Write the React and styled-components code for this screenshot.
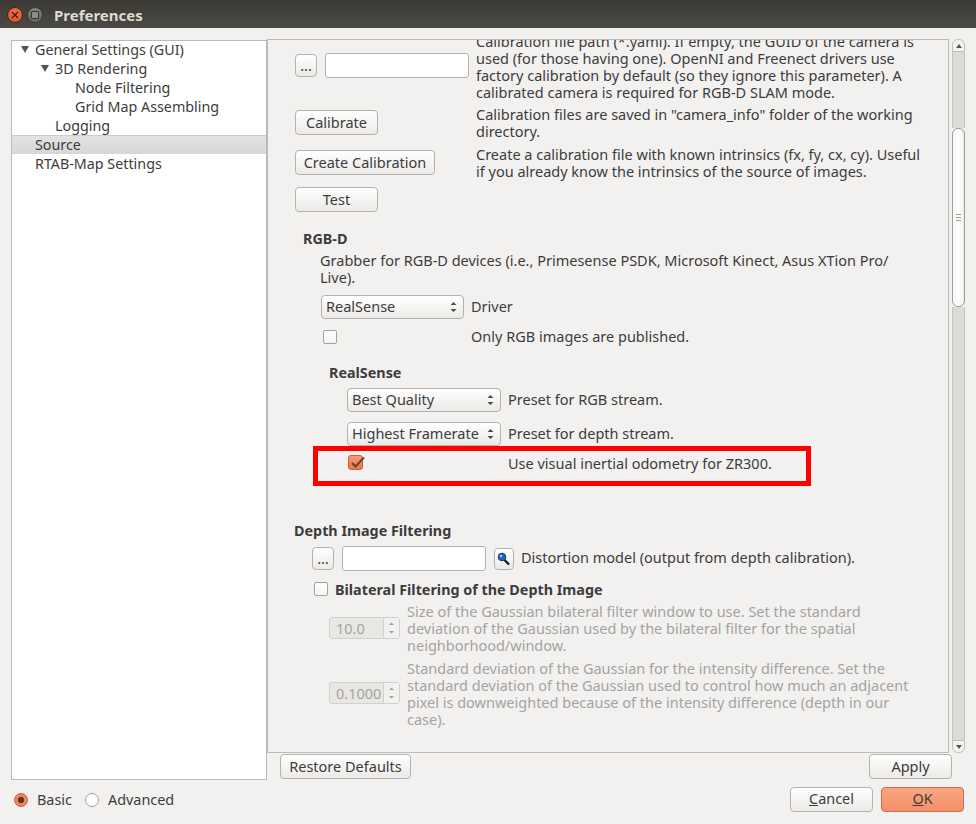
import styled, { createGlobalStyle } from "styled-components";

const App = () => {
  return (
    <>
      <Global />
      <Window>
        <TitleBar>
          <CloseDot>
            <svg width="8" height="8" viewBox="0 0 8 8">
              <path d="M1 1 L7 7 M7 1 L1 7" stroke="#4a1a08" strokeWidth="1.4" />
            </svg>
          </CloseDot>
          <MaxDot>
            <MaxSquare />
          </MaxDot>
          <Title>Preferences</Title>
        </TitleBar>

        <Body>
          <Tree>
            {treeItems.map((item) => (
              <TreeItem key={item.label} $level={item.level} $selected={item.selected}>
                {item.open && <TreeArrow $level={item.level} />}
                {item.label}
              </TreeItem>
            ))}
          </Tree>

          <RightColumn>
            <ScrollArea>
              <Viewport>
                <Content>
                  <Row $left={27}>
                    <Controls $w={181} $lift={5}>
                      <DotsButton>...</DotsButton>
                      <FileInput />
                    </Controls>
                    <Text>
                      Calibration file path (*.yaml). If empty, the GUID of the camera is<br />
                      used (for those having one). OpenNI and Freenect drivers use<br />
                      factory calibration by default (so they ignore this parameter). A<br />
                      calibrated camera is required for RGB-D SLAM mode.
                    </Text>
                  </Row>
                  <Row $top={5} $left={27}>
                    <Controls $w={181} $lift={3}>
                      <Button $w={83}>Calibrate</Button>
                    </Controls>
                    <Text>
                      Calibration files are saved in "camera_info" folder of the working<br />
                      directory.
                    </Text>
                  </Row>
                  <Row $top={6} $left={27}>
                    <Controls $w={181} $lift={3}>
                      <Button $w={140}>Create Calibration</Button>
                    </Controls>
                    <Text>
                      Create a calibration file with known intrinsics (fx, fy, cx, cy). Useful<br />
                      if you already know the intrinsics of the source of images.
                    </Text>
                  </Row>
                  <Row $top={6} $left={27}>
                    <Button $w={83}>Test</Button>
                  </Row>

                  <Heading $top={18} $left={35}>RGB-D</Heading>
                  <Row $top={6} $left={52}>
                    <Text>
                      Grabber for RGB-D devices (i.e., Primesense PSDK, Microsoft Kinect, Asus XTion Pro/<br />
                      Live).
                    </Text>
                  </Row>
                  <Row $top={8} $left={53}>
                    <Controls $w={150}>
                      <Select $w={143}>RealSense<SelectArrows /></Select>
                    </Controls>
                    <Text>Driver</Text>
                  </Row>
                  <Row $top={10} $left={55}>
                    <Controls $w={148} $lift={2}>
                      <CheckBox />
                    </Controls>
                    <Text>Only RGB images are published.</Text>
                  </Row>

                  <Heading $top={18} $left={61}>RealSense</Heading>
                  <Row $top={7} $left={79}>
                    <Controls $w={161}>
                      <Select $w={154}>Best Quality<SelectArrows /></Select>
                    </Controls>
                    <Text>Preset for RGB stream.</Text>
                  </Row>
                  <Row $top={10} $left={79}>
                    <Controls $w={161}>
                      <Select $w={154}>Highest Framerate<SelectArrows /></Select>
                    </Controls>
                    <Text>Preset for depth stream.</Text>
                  </Row>
                  <HighlightedRow $top={10} $left={80}>
                    <Controls $w={160} $lift={4}>
                      <CheckedBox>
                        <svg width="18" height="16" viewBox="0 0 18 16">
                          <path d="M3 7 L6.5 10.5 L15 1.5" fill="none" stroke="#6b4030" strokeWidth="2" />
                        </svg>
                      </CheckedBox>
                    </Controls>
                    <Text>Use visual inertial odometry for ZR300.</Text>
                    <RedBox />
                  </HighlightedRow>

                  <Heading $top={49} $left={26}>Depth Image Filtering</Heading>
                  <Row $top={7} $left={44}>
                    <Controls $w={209}>
                      <DotsButton>...</DotsButton>
                      <FileInput />
                      <IconButton>
                        <svg width="16" height="16" viewBox="0 0 16 16">
                          <path d="M8.5 9 L13 13.5" stroke="#1b1b1b" strokeWidth="2.4" />
                          <circle cx="6" cy="6" r="3.8" fill="#1f66b8" stroke="#123a66" strokeWidth="1" />
                          <circle cx="5" cy="5" r="1.2" fill="#a9d0f2" />
                        </svg>
                      </IconButton>
                    </Controls>
                    <Text>Distortion model (output from depth calibration).</Text>
                  </Row>
                  <Row $top={10} $left={46}>
                    <Controls $w={21} $lift={2}>
                      <CheckBox />
                    </Controls>
                    <Heading>Bilateral Filtering of the Depth Image</Heading>
                  </Row>
                  <Row $top={6} $left={61}>
                    <Controls $w={78} $lift={3}>
                      <Spin>10.0<SpinArrows /></Spin>
                    </Controls>
                    <Text $muted>
                      Size of the Gaussian bilateral filter window to use. Set the standard<br />
                      deviation of the Gaussian used by the bilateral filter for the spatial<br />
                      neighborhood/window.
                    </Text>
                  </Row>
                  <Row $top={6} $left={61}>
                    <Controls $w={78} $lift={4}>
                      <Spin>0.1000<SpinArrows /></Spin>
                    </Controls>
                    <Text $muted>
                      Standard deviation of the Gaussian for the intensity difference. Set the<br />
                      standard deviation of the Gaussian used to control how much an adjacent<br />
                      pixel is downweighted because of the intensity difference (depth in our<br />
                      case).
                    </Text>
                  </Row>
                </Content>
              </Viewport>
              <ScrollBar>
                <Stepper $up>
                  <StepArrow $up />
                </Stepper>
                <Trough $h={76} />
                <Thumb>
                  <Grip />
                </Thumb>
                <Trough $grow />
                <Stepper>
                  <StepArrow />
                </Stepper>
              </ScrollBar>
            </ScrollArea>
            <ActionRow>
              <Button $w={131}>Restore Defaults</Button>
              <Button $w={83}>Apply</Button>
            </ActionRow>
          </RightColumn>
        </Body>

        <Footer>
          <Modes>
            <RadioOn />
            <ModeLabel>Basic</ModeLabel>
            <RadioOff />
            <ModeLabel>Advanced</ModeLabel>
          </Modes>
          <DialogButtons>
            <Button $w={83}><u>C</u>ancel</Button>
            <OkButton $w={83}><u>O</u>K</OkButton>
          </DialogButtons>
        </Footer>
      </Window>
    </>
  );
};

const treeItems = [
  { label: "General Settings (GUI)", level: 0, open: true },
  { label: "3D Rendering", level: 1, open: true },
  { label: "Node Filtering", level: 2 },
  { label: "Grid Map Assembling", level: 2 },
  { label: "Logging", level: 1 },
  { label: "Source", level: 0, selected: true },
  { label: "RTAB-Map Settings", level: 0 },
];

const Global = createGlobalStyle`
  html, body {
    margin: 0;
    padding: 0;
    background: #f2f1f0;
  }
  * {
    box-sizing: border-box;
  }
`;

const Window = styled.div`
  width: 976px;
  height: 824px;
  overflow: hidden;
  display: flex;
  flex-direction: column;
  background: #f2f1f0;
  color: #3c3c3c;
  font-family: "Noto Sans", "Open Sans", sans-serif;
  font-size: 14.5px;
`;

const TitleBar = styled.div`
  height: 28px;
  flex: none;
  display: flex;
  align-items: center;
  padding: 2px 0 0 7px;
  background: linear-gradient(#3a3934, #4b4a44);
`;

const CloseDot = styled.div`
  width: 16px;
  height: 16px;
  border-radius: 50%;
  display: flex;
  align-items: center;
  justify-content: center;
  background: radial-gradient(circle at 50% 35%, #f4774a, #d9481c);
  border: 1px solid #3a2a20;
`;

const MaxDot = styled.div`
  width: 16px;
  height: 16px;
  margin-left: 4px;
  border-radius: 50%;
  display: flex;
  align-items: center;
  justify-content: center;
  background: linear-gradient(#83827b, #65645f);
  border: 1px solid #3a3934;
`;

const MaxSquare = styled.div`
  width: 8px;
  height: 8px;
  border: 1px solid #35342f;
  border-radius: 1px;
  background: #8d8c85;
`;

const Title = styled.div`
  margin-left: 11px;
  font-weight: 700;
  font-size: 15px;
  color: #dfdbd2;
`;

const Body = styled.div`
  flex: none;
  height: 751px;
  padding: 12px 0 0 11px;
  display: flex;
`;

const Tree = styled.div`
  width: 256px;
  height: 740px;
  flex: none;
  background: #fff;
  font-size: 14.3px;
  border: 1px solid #bdb9b4;
  border-top: none;
  box-shadow: inset 0 1px 0 #bdb9b4;
`;

const TreeItem = styled.div`
  position: relative;
  height: 19px;
  line-height: 20px;
  padding-left: ${(p) => 23 + p.$level * 20}px;
  white-space: nowrap;
  ${(p) => p.$selected && "background: linear-gradient(#e4e3e1, #d8d7d5); box-shadow: inset 0 1px 0 #cfcdca;"}
`;

const TreeArrow = styled.span`
  position: absolute;
  left: ${(p) => 9 + p.$level * 20}px;
  top: 6px;
  width: 0;
  height: 0;
  border-left: 4px solid transparent;
  border-right: 4px solid transparent;
  border-top: 7px solid #555;
`;

const RightColumn = styled.div`
  flex: none;
  width: 698px;
  margin-top: -1px;
  display: flex;
  flex-direction: column;
`;

const ScrollArea = styled.div`
  height: 714px;
  flex: none;
  display: flex;
`;

const Viewport = styled.div`
  width: 682px;
  flex: none;
  overflow: hidden;
  border: 1px solid #bdb9b4;
`;

const Content = styled.div`
  margin-top: -6px;
`;

const Row = styled.div`
  display: flex;
  align-items: center;
  margin: ${(p) => p.$top || 0}px 0 0 ${(p) => p.$left || 0}px;
`;

const HighlightedRow = styled(Row)`
  position: relative;
  height: 17px;
`;

const RedBox = styled.div`
  position: absolute;
  left: -35px;
  top: -10px;
  width: 498px;
  height: 40px;
  border: 5px solid #ff0000;
  pointer-events: none;
`;

const Controls = styled.div`
  width: ${(p) => p.$w}px;
  flex: none;
  display: flex;
  align-items: center;
  gap: 8px;
  padding-bottom: ${(p) => p.$lift || 0}px;
`;

const Text = styled.div`
  line-height: 17px;
  margin: -1px 0 1px;
  white-space: nowrap;
  color: ${(p) => (p.$muted ? "#a5a3a0" : "inherit")};
`;

const Heading = styled.div`
  font-weight: 700;
  font-size: 14.35px;
  line-height: 17px;
  white-space: nowrap;
  margin: ${(p) => p.$top || 0}px 0 0 ${(p) => p.$left || 0}px;
`;

const Button = styled.div`
  width: ${(p) => p.$w}px;
  height: 25px;
  flex: none;
  display: flex;
  align-items: center;
  justify-content: center;
  padding-bottom: 2px;
  white-space: nowrap;
  border: 1px solid #b5b1ab;
  border-radius: 4px;
  background: linear-gradient(#ffffff, #ebeae8);
`;

const OkButton = styled(Button)`
  background: linear-gradient(#f9a684, #f58f68);
  border-color: #c86f4e;
`;

const DotsButton = styled(Button)`
  width: 22px;
  height: 23px;
`;

const IconButton = styled(Button)`
  width: 20px;
  height: 22px;
  padding-bottom: 0;
`;

const FileInput = styled.div`
  width: 144px;
  height: 25px;
  flex: none;
  background: #fff;
  border: 1px solid #b5b1ab;
  border-radius: 3px;
`;

const SelectBox = styled(Button)`
  justify-content: flex-start;
  position: relative;
  height: 24px;
  padding-left: 4px;
`;

const ArrowStack = styled.span`
  position: absolute;
  right: 6px;
  top: 50%;
  transform: translateY(-50%);
  display: flex;
`;

const SelectArrows = () => (
  <ArrowStack>
    <svg width="7" height="14" viewBox="0 0 7 14">
      <path d="M0.5 5 L3.5 2 L6.5 5 Z M0.5 9 L3.5 12 L6.5 9 Z" fill="#4c4c4c" />
    </svg>
  </ArrowStack>
);

const Select = ({ $w, children }) => <SelectBox $w={$w}>{children}</SelectBox>;

const CheckBox = styled.div`
  width: 14px;
  height: 14px;
  flex: none;
  background: linear-gradient(#ffffff, #f4f4f4);
  border: 1px solid #a5a19b;
  border-radius: 2px;
`;

const CheckedBox = styled.div`
  width: 15px;
  height: 15px;
  flex: none;
  background: linear-gradient(#f39a74, #e7774d);
  border: 1px solid #c4623a;
  border-radius: 3px;
`;

const SpinBox = styled.div`
  position: relative;
  width: 71px;
  height: 22px;
  flex: none;
  display: flex;
  align-items: center;
  padding-left: 6px;
  color: #a5a3a0;
  background: #e8e7e5;
  border: 1px solid #d2d0cd;
  border-radius: 3px;
`;

const SpinSide = styled.span`
  position: absolute;
  right: 0;
  top: 0;
  bottom: 0;
  width: 16px;
  display: flex;
  align-items: center;
  justify-content: center;
  background: #f2f1f0;
  border-left: 1px solid #d2d0cd;
`;

const SpinArrows = () => (
  <SpinSide>
    <svg width="7" height="16" viewBox="0 0 7 16">
      <path d="M1 5 L3.5 2.5 L6 5 Z M1 11 L3.5 13.5 L6 11 Z" fill="#a5a3a0" />
    </svg>
  </SpinSide>
);

const Spin = ({ children }) => <SpinBox>{children}</SpinBox>;

const ScrollBar = styled.div`
  width: 13px;
  flex: none;
  margin-left: 3px;
  display: flex;
  flex-direction: column;
`;

const Stepper = styled.div`
  height: 13px;
  flex: none;
  display: flex;
  align-items: center;
  justify-content: center;
  background: #f4f3f2;
  border: 1px solid #c0bdb8;
  border-radius: ${(p) => (p.$up ? "6px 6px 0 0" : "0 0 6px 6px")};
`;

const StepArrow = styled.span`
  width: 0;
  height: 0;
  border-left: 3px solid transparent;
  border-right: 3px solid transparent;
  ${(p) => (p.$up ? "border-bottom: 4px solid #555;" : "border-top: 4px solid #555;")}
`;

const Trough = styled.div`
  ${(p) => (p.$grow ? "flex: 1;" : `height: ${p.$h}px; flex: none;`)}
  background: #dcdbd9;
  border-left: 1px solid #c6c3be;
  border-right: 1px solid #c6c3be;
`;

const Thumb = styled.div`
  height: 179px;
  flex: none;
  display: flex;
  align-items: center;
  justify-content: center;
  background: linear-gradient(90deg, #f7f6f5, #ffffff 50%, #eeedeb);
  border: 1px solid #9f9c97;
  border-radius: 6px;
`;

const Grip = styled.div`
  width: 5px;
  height: 7px;
  border-top: 1px solid #9f9c97;
  border-bottom: 1px solid #9f9c97;
  background: linear-gradient(#9f9c97, #9f9c97) center / 100% 1px no-repeat;
`;

const ActionRow = styled.div`
  display: flex;
  justify-content: space-between;
  padding: 1px 13px 0 13px;
`;

const Footer = styled.div`
  flex: none;
  display: flex;
  align-items: center;
  justify-content: space-between;
  padding: 8px 12px 0 14px;
  font-size: 14.4px;
`;

const Modes = styled.div`
  display: flex;
  align-items: center;
`;

const RadioOff = styled.div`
  width: 14px;
  height: 14px;
  margin-left: 13px;
  border-radius: 50%;
  background: #fff;
  border: 1px solid #a5a19b;
`;

const RadioOn = styled(RadioOff)`
  margin-left: 0;
  border-color: #c4623a;
  background: radial-gradient(circle, #5c3a2a 0 3px, #ee8458 3.5px);
`;

const ModeLabel = styled.span`
  margin-left: 9px;
`;

const DialogButtons = styled.div`
  display: flex;
  gap: 8px;
`;

export default App;
